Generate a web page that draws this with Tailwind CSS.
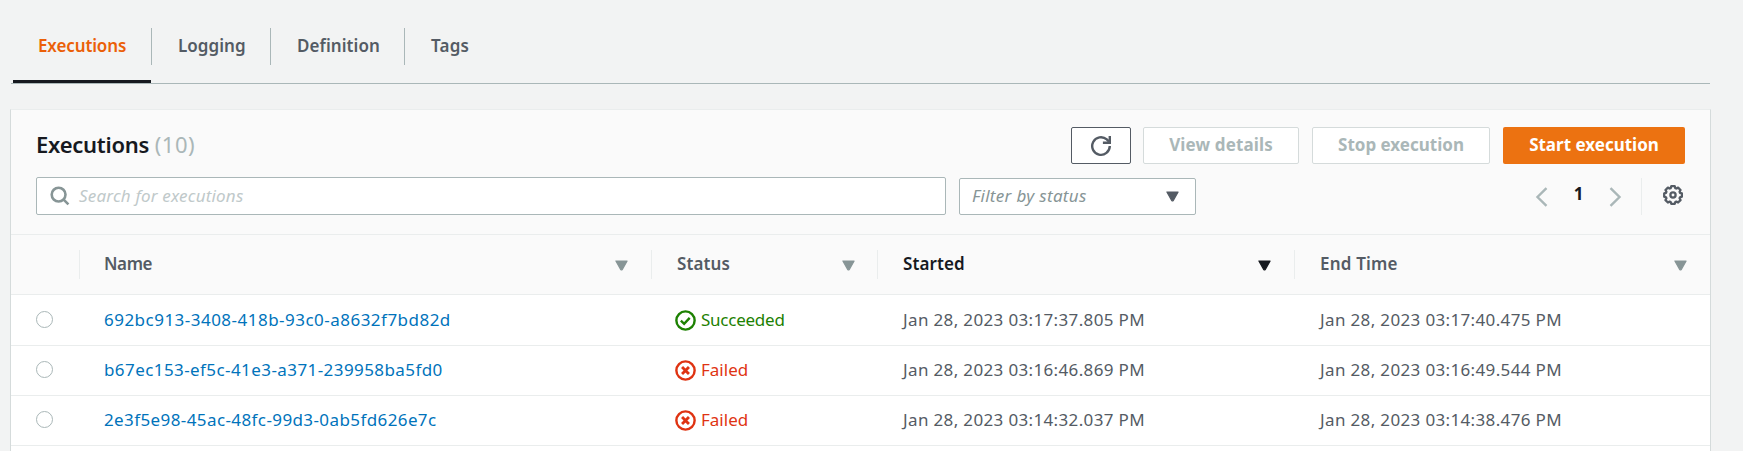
<!DOCTYPE html>
<html lang="en">
<head>
<meta charset="utf-8">
<title>Executions</title>
<script src="https://cdn.jsdelivr.net/npm/@tailwindcss/browser@4"></script>
</head>
<body class="h-[451px] overflow-hidden bg-[#f2f3f3] font-['Noto_Sans',sans-serif] text-[17px] leading-6 text-[#545b64]">
<svg class="hidden">
  <symbol id="tri" viewBox="0 0 13 11"><path d="M.9 1h11.200L7.200 9.600q-.7.800-1.400 0z" fill="currentColor" stroke="currentColor" stroke-width="1.200" stroke-linejoin="round"/></symbol>
  <symbol id="ok" viewBox="0 0 20 20" fill="none" stroke="currentColor" stroke-width="2.3"><circle cx="10" cy="10" r="8.7"/><path d="M5.6 10.1l3.1 3 5.3-5.6"/></symbol>
  <symbol id="fail" viewBox="0 0 20 20" fill="none" stroke="currentColor"><circle cx="10" cy="10" r="8.7" stroke-width="2.3"/><path d="M6.7 6.7l6.6 6.6M13.3 6.7l-6.6 6.6" stroke-width="2.7"/></symbol>
</svg>

<nav class="ml-[11px] flex h-[84px] w-[1699px] items-stretch border-b border-[#aab7b8] pl-0.5 font-semibold">
  <a class="flex w-[138px] border-b-[3px] border-[#16191f] pt-[34px] pl-[25px] tracking-[-0.12px] text-[#eb5f07]">Executions</a>
  <a class="mt-7 flex h-[37px] w-[119px] border-l border-[#aab7b8] pt-1.5 pl-[26px] tracking-[0.05px]">Logging</a>
  <a class="mt-7 flex h-[37px] w-[134px] border-l border-[#aab7b8] pt-1.5 pl-[26px] tracking-[0.07px]">Definition</a>
  <a class="mt-7 flex h-[37px] border-l border-[#aab7b8] pt-1.5 pl-[26px] tracking-[0.2px]">Tags</a>
</nav>

<main class="mt-[25px] ml-2.5 h-[342px] w-[1701px] overflow-hidden border border-b-0 border-[#d5dbdb] border-t-[#eaeded] bg-white">
  <header class="h-[125px] border-b border-[#eaeded] bg-[#fafafa] pt-[17px] pr-[25px] pl-[25px]">
    <div class="flex h-[37px] items-center">
      <h1 class="pb-[3px] text-[22px] leading-[30px] font-semibold tracking-[-0.25px] text-[#16191f]">Executions <span class="font-normal tracking-[0.5px] text-[#aab7b8]">(10)</span></h1>
      <div class="ml-auto flex h-[37px] font-bold">
        <button class="flex w-[60px] items-center justify-center rounded-xs border border-[#545b64] bg-white">
          <svg class="size-[22px]" viewBox="0 0 22 22" fill="none" stroke="currentColor" stroke-width="2.4"><path d="M19.8 11a8.8 8.8 0 1 1-3-6.6l2.2 2.3"/><path d="M19.8 1v6.8h-6.9"/></svg>
        </button>
        <button class="ml-3 w-[156px] rounded-xs border border-[#d5dbdb] bg-white pb-0.5 tracking-[0.13px] text-[#aab7b8]">View details</button>
        <button class="ml-[13px] w-[178px] rounded-xs border border-[#d5dbdb] bg-white pb-0.5 text-[#aab7b8]">Stop execution</button>
        <button class="ml-[13px] w-[182px] rounded-xs bg-[#ec7211] pb-0.5 text-white">Start execution</button>
      </div>
    </div>
    <div class="mt-[13px] flex h-[38px] items-end">
      <div class="flex h-[38px] w-[910px] items-center rounded-xs border border-[#aab7b8] bg-white pl-[13px]">
        <svg class="size-5 text-[#879596]" viewBox="0 0 20 20" fill="none" stroke="currentColor" stroke-width="2.6"><circle cx="8.6" cy="8.6" r="6.9"/><path d="M13.4 13.4l5 5"/></svg>
        <span class="ml-[9px] pb-px tracking-[0.19px] text-[#c0c9ca] italic">Search for executions</span>
      </div>
      <div class="ml-[13px] flex h-[37px] w-[237px] items-center justify-between rounded-xs border border-[#aab7b8] bg-white pr-4 pl-3">
        <span class="pb-px tracking-[0.32px] text-[#879596] italic">Filter by status</span>
        <svg class="h-[11px] w-[13px]"><use href="#tri"/></svg>
      </div>
      <div class="mr-0.5 ml-auto flex h-[37px] items-center">
        <svg class="h-5 w-[13px] text-[#aab7b8]" viewBox="0 0 13 20" fill="none" stroke="currentColor" stroke-width="2.4"><path d="M11.5 1.2L2.5 10l9 8.8"/></svg>
        <span class="mb-1.5 w-[61px] text-center font-bold text-[#16191f]">1</span>
        <svg class="h-5 w-[13px] text-[#aab7b8]" viewBox="0 0 13 20" fill="none" stroke="currentColor" stroke-width="2.4"><path d="M1.5 1.2l9 8.8-9 8.8"/></svg>
        <span class="ml-[19px] h-[37px] w-px bg-[#eaeded]"></span>
        <svg class="mb-[3px] ml-[21px] size-5" viewBox="0 0 20 20" fill="none" stroke="currentColor" stroke-width="2.3"><path stroke-linejoin="round" d="M8.3 1.2h3.4l.6 1.9 1 .4 1.8-.9 2.4 2.4-.9 1.8.4 1 1.9.5v3.4l-1.9.6-.4 1 .9 1.8-2.4 2.4-1.8-.9-1 .4-.6 1.8H8.3l-.6-1.8-1-.4-1.8.9-2.4-2.4.9-1.8-.4-1-1.8-.6V8.300l1.800-.5.4-1-.9-1.800 2.400-2.400 1.800.9 1-.4z"/><circle cx="10" cy="10" r="2.600"/></svg>
      </div>
    </div>
  </header>

  <section>
    <div class="flex h-[60px] items-center border-b border-[#eaeded] bg-[#fafafa] font-semibold">
      <div class="w-[68px]"></div>
      <div class="flex h-[29px] w-[572px] items-center justify-between border-l border-[#eaeded] pr-[23px] pl-6"><span class="pb-0.5 tracking-[-0.4px]">Name</span><svg class="mt-px h-[11px] w-[13px] text-[#879596]"><use href="#tri"/></svg></div>
      <div class="flex h-[29px] w-[226px] items-center justify-between border-l border-[#eaeded] pr-[22px] pl-[25px]"><span class="pb-0.5 tracking-[0.1px]">Status</span><svg class="mt-px h-[11px] w-[13px] text-[#879596]"><use href="#tri"/></svg></div>
      <div class="flex h-[29px] w-[417px] items-center justify-between border-l border-[#eaeded] pr-[23px] pl-[25px] text-[#16191f]"><span class="pb-0.5 tracking-[0.1px]">Started</span><svg class="mt-px h-[11px] w-[13px]"><use href="#tri"/></svg></div>
      <div class="flex h-[29px] w-[416px] items-center justify-between border-l border-[#eaeded] pr-[23px] pl-[25px]"><span class="pb-0.5 tracking-[0.2px]">End Time</span><svg class="mt-px h-[11px] w-[13px] text-[#879596]"><use href="#tri"/></svg></div>
    </div>

    <div class="flex h-[51px] items-center border-b border-[#eaeded]">
      <div class="w-[68px] pl-[25px]"><span class="mb-0.5 block size-[17px] rounded-full border border-[#aab7b8]"></span></div>
      <div class="w-[572px] pl-[25px] tracking-[0.48px] text-[#0073bb]">692bc913-3408-418b-93c0-a8632f7bd82d</div>
      <div class="flex w-[226px] items-center pl-6 text-[#1d8102]"><svg class="mr-[5px] size-[21px]"><use href="#ok"/></svg><span class="tracking-[-0.25px]">Succeeded</span></div>
      <div class="w-[417px] pl-[26px] tracking-[0.35px]">Jan 28, 2023 03:17:37.805 PM</div>
      <div class="pl-[26px] tracking-[0.35px]">Jan 28, 2023 03:17:40.475 PM</div>
    </div>
    <div class="flex h-[50px] items-center border-b border-[#eaeded] pb-px">
      <div class="w-[68px] pl-[25px]"><span class="mb-0.5 block size-[17px] rounded-full border border-[#aab7b8]"></span></div>
      <div class="w-[572px] pl-[25px] tracking-[0.42px] text-[#0073bb]">b67ec153-ef5c-41e3-a371-239958ba5fd0</div>
      <div class="flex w-[226px] items-center pl-6 text-[#df3312]"><svg class="mr-[5px] size-[21px]"><use href="#fail"/></svg><span>Failed</span></div>
      <div class="w-[417px] pl-[26px] tracking-[0.35px]">Jan 28, 2023 03:16:46.869 PM</div>
      <div class="pl-[26px] tracking-[0.35px]">Jan 28, 2023 03:16:49.544 PM</div>
    </div>
    <div class="flex h-[50px] items-center border-b border-[#eaeded] pb-px">
      <div class="w-[68px] pl-[25px]"><span class="mb-0.5 block size-[17px] rounded-full border border-[#aab7b8]"></span></div>
      <div class="w-[572px] pl-[25px] tracking-[0.4px] text-[#0073bb]">2e3f5e98-45ac-48fc-99d3-0ab5fd626e7c</div>
      <div class="flex w-[226px] items-center pl-6 text-[#df3312]"><svg class="mr-[5px] size-[21px]"><use href="#fail"/></svg><span>Failed</span></div>
      <div class="w-[417px] pl-[26px] tracking-[0.35px]">Jan 28, 2023 03:14:32.037 PM</div>
      <div class="pl-[26px] tracking-[0.35px]">Jan 28, 2023 03:14:38.476 PM</div>
    </div>
  </section>
</main>
</body>
</html>
